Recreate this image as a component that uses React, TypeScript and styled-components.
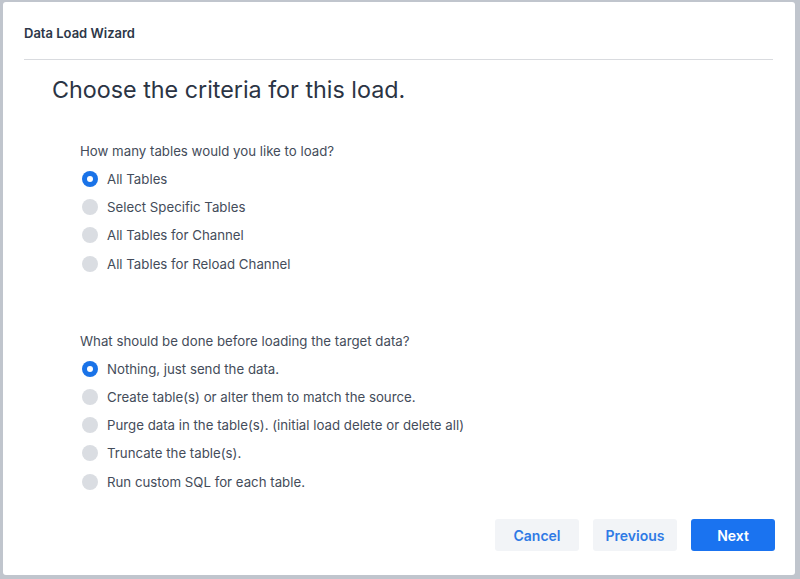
import React from "react";
import styled, { createGlobalStyle } from "styled-components";

const Global = createGlobalStyle`
  html, body { margin: 0; padding: 0; }
  body { font-family: Inter, "Noto Sans", sans-serif; background: #c3c7cf; }
`;

const Backdrop = styled.div`
  width: 800px;
  height: 579px;
  box-sizing: border-box;
  padding: 2px 5px 4px 3px;
  background: #c0c5cd;
  display: flex;
`;

const Modal = styled.div`
  flex: 1;
  background: #ffffff;
  border-radius: 3px;
  display: flex;
  flex-direction: column;
  padding: 0 20px 24px 21px;
  box-sizing: border-box;
`;

const Header = styled.div`
  height: 58px;
  display: flex;
  align-items: center;
  font-family: Inter, sans-serif;
  font-weight: 600;
  font-size: 13px;
  color: #2d3748;
  border-bottom: 1px solid #d9dbdf;
  padding-top: 4px;
  box-sizing: border-box;
  margin-right: 2px;
`;

const Heading = styled.h1`
  margin: 16px 0 0 28px;
  font-family: Inter, sans-serif;
  font-weight: 400;
  font-size: 23.3px;
  color: #2b3444;
  line-height: 28px;
`;

const Section = styled.div<{ $top: number }>`
  margin: ${(p) => p.$top}px 0 0 56px;
  display: flex;
  flex-direction: column;
`;

const Question = styled.div`
  font-size: 13.25px;
  color: #444c5a;
  line-height: 18px;
  margin-bottom: 5px;
`;

const Option = styled.label`
  display: flex;
  align-items: center;
  height: 28.2px;
  font-size: 13.25px;
  color: #444c5a;
  gap: 9px;
`;

const Radio = styled.span<{ $on?: boolean }>`
  width: 16px;
  height: 16px;
  border-radius: 50%;
  margin-left: 2px;
  box-sizing: border-box;
  background: ${(p) => (p.$on ? "#1a73e8" : "#dadde2")};
  display: flex;
  align-items: center;
  justify-content: center;
  &::after {
    content: "";
    width: 6px;
    height: 6px;
    border-radius: 50%;
    background: #fff;
    display: ${(p) => (p.$on ? "block" : "none")};
  }
`;

const Footer = styled.div`
  margin-top: auto;
  display: flex;
  justify-content: flex-end;
  gap: 14px;
`;

const Button = styled.button<{ $primary?: boolean }>`
  width: 84px;
  height: 32px;
  border: none;
  border-radius: 3px;
  font-family: Inter, sans-serif;
  font-weight: 600;
  font-size: 14px;
  background: ${(p) => (p.$primary ? "#1a73f0" : "#f2f4f7")};
  color: ${(p) => (p.$primary ? "#ffffff" : "#2f7ae5")};
`;

const q1 = [
  "All Tables",
  "Select Specific Tables",
  "All Tables for Channel",
  "All Tables for Reload Channel",
];
const q2 = [
  "Nothing, just send the data.",
  "Create table(s) or alter them to match the source.",
  "Purge data in the table(s). (initial load delete or delete all)",
  "Truncate the table(s).",
  "Run custom SQL for each table.",
];

export default function App() {
  return (
    <>
      <Global />
      <Backdrop>
        <Modal>
          <Header>Data Load Wizard</Header>
          <Heading>Choose the criteria for this load.</Heading>
          <Section $top={38}>
            <Question>How many tables would you like to load?</Question>
            {q1.map((t, i) => (
              <Option key={t}>
                <Radio $on={i === 0} />
                {t}
              </Option>
            ))}
          </Section>
          <Section $top={54}>
            <Question>What should be done before loading the target data?</Question>
            {q2.map((t, i) => (
              <Option key={t}>
                <Radio $on={i === 0} />
                {t}
              </Option>
            ))}
          </Section>
          <Footer>
            <Button>Cancel</Button>
            <Button>Previous</Button>
            <Button $primary>Next</Button>
          </Footer>
        </Modal>
      </Backdrop>
    </>
  );
}
